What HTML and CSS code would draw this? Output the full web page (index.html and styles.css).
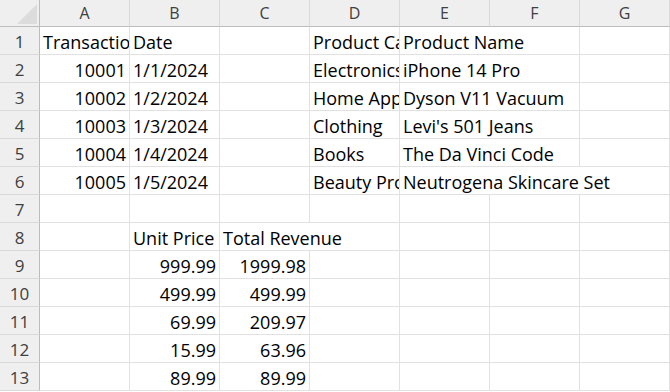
FILE: index.html
```html
<!DOCTYPE html>
<html lang="en">
<head>
<meta charset="utf-8">
<title>Sheet</title>
<link rel="stylesheet" href="styles.css">
</head>
<body>
<div class="sheet">
  <div class="corner"><svg class="corner-tri" width="20" height="20" viewBox="0 0 20 20"><polygon points="20,0 20,20 0,20" fill="#dcdcdc"/></svg></div>
  <div class="colhead">A</div>
  <div class="colhead">B</div>
  <div class="colhead">C</div>
  <div class="colhead">D</div>
  <div class="colhead">E</div>
  <div class="colhead">F</div>
  <div class="colhead">G</div>

  <div class="rowhead">1</div>
  <div class="cell">Transaction ID</div>
  <div class="cell">Date</div>
  <div class="cell"></div>
  <div class="cell">Product Category</div>
  <div class="cell span2">Product Name</div>
  <div class="cell"></div>

  <div class="rowhead">2</div>
  <div class="cell num">10001</div>
  <div class="cell">1/1/2024</div>
  <div class="cell"></div>
  <div class="cell">Electronics</div>
  <div class="cell span2">iPhone 14 Pro</div>
  <div class="cell"></div>

  <div class="rowhead">3</div>
  <div class="cell num">10002</div>
  <div class="cell">1/2/2024</div>
  <div class="cell"></div>
  <div class="cell">Home Appliances</div>
  <div class="cell span2">Dyson V11 Vacuum</div>
  <div class="cell"></div>

  <div class="rowhead">4</div>
  <div class="cell num">10003</div>
  <div class="cell">1/3/2024</div>
  <div class="cell"></div>
  <div class="cell">Clothing</div>
  <div class="cell span2">Levi's 501 Jeans</div>
  <div class="cell"></div>

  <div class="rowhead">5</div>
  <div class="cell num">10004</div>
  <div class="cell">1/4/2024</div>
  <div class="cell"></div>
  <div class="cell">Books</div>
  <div class="cell span2">The Da Vinci Code</div>
  <div class="cell"></div>

  <div class="rowhead">6</div>
  <div class="cell num">10005</div>
  <div class="cell">1/5/2024</div>
  <div class="cell"></div>
  <div class="cell">Beauty Products</div>
  <div class="cell span3">Neutrogena Skincare Set</div>

  <div class="rowhead">7</div>
  <div class="cell"></div>
  <div class="cell"></div>
  <div class="cell"></div>
  <div class="cell"></div>
  <div class="cell"></div>
  <div class="cell"></div>
  <div class="cell"></div>

  <div class="rowhead">8</div>
  <div class="cell"></div>
  <div class="cell">Unit Price</div>
  <div class="cell span2">Total Revenue</div>
  <div class="cell"></div>
  <div class="cell"></div>
  <div class="cell"></div>

  <div class="rowhead">9</div>
  <div class="cell"></div>
  <div class="cell num">999.99</div>
  <div class="cell num">1999.98</div>
  <div class="cell"></div>
  <div class="cell"></div>
  <div class="cell"></div>
  <div class="cell"></div>

  <div class="rowhead">10</div>
  <div class="cell"></div>
  <div class="cell num">499.99</div>
  <div class="cell num">499.99</div>
  <div class="cell"></div>
  <div class="cell"></div>
  <div class="cell"></div>
  <div class="cell"></div>

  <div class="rowhead">11</div>
  <div class="cell"></div>
  <div class="cell num">69.99</div>
  <div class="cell num">209.97</div>
  <div class="cell"></div>
  <div class="cell"></div>
  <div class="cell"></div>
  <div class="cell"></div>

  <div class="rowhead">12</div>
  <div class="cell"></div>
  <div class="cell num">15.99</div>
  <div class="cell num">63.96</div>
  <div class="cell"></div>
  <div class="cell"></div>
  <div class="cell"></div>
  <div class="cell"></div>

  <div class="rowhead">13</div>
  <div class="cell"></div>
  <div class="cell num">89.99</div>
  <div class="cell num">89.99</div>
  <div class="cell"></div>
  <div class="cell"></div>
  <div class="cell"></div>
  <div class="cell"></div>
</div>
</body>
</html>
```

FILE: styles.css
```css
html, body {
  margin: 0;
  padding: 0;
  background: #ffffff;
}

.sheet {
  display: grid;
  grid-template-columns: 40px repeat(7, 90px);
  grid-template-rows: 27px;
  grid-auto-rows: 28px;
  width: 670px;
  height: 392px;
  overflow: hidden;
  font-family: "Open Sans", "Noto Sans", sans-serif;
  color: #000000;
}

.corner {
  background: #efefef;
  border-right: 1px solid #bdbdbd;
  border-bottom: 1px solid #bdbdbd;
  box-sizing: border-box;
  display: flex;
  align-items: flex-end;
  justify-content: flex-end;
  padding: 0 2px 2px 0;
}

.corner-tri {
  display: block;
}

.colhead {
  background: #efefef;
  border-right: 1px solid #d9d9d9;
  border-bottom: 1px solid #bdbdbd;
  box-sizing: border-box;
  text-align: center;
  font-size: 16px;
  padding-top: 1px;
  line-height: 25px;
  color: #404040;
}

.rowhead {
  background: #efefef;
  border-right: 1px solid #bdbdbd;
  border-bottom: 1px solid #d9d9d9;
  box-sizing: border-box;
  text-align: center;
  font-size: 17px;
  padding-top: 2px;
  line-height: 25px;
  color: #404040;
}

.cell {
  border-right: 1px solid #e1e1e1;
  border-bottom: 1px solid #e1e1e1;
  box-sizing: border-box;
  font-size: 18px;
  padding: 4px 3px 0;
  line-height: 23px;
  white-space: nowrap;
  overflow: hidden;
}

.num {
  text-align: right;
}

.span2 {
  grid-column: span 2;
}

.span3 {
  grid-column: span 3;
}
```
